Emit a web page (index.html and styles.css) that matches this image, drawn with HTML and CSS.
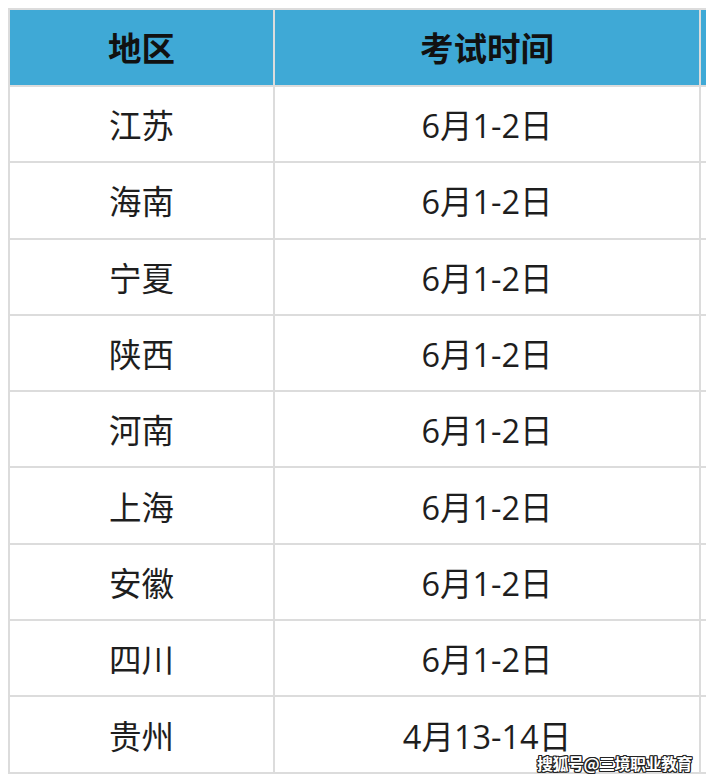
FILE: index.html
```html
<!DOCTYPE html>
<html lang="zh-CN">
<head>
<meta charset="utf-8">
<link rel="stylesheet" href="styles.css">
</head>
<body>
<div class="wrap">
<table class="exam">
  <thead>
    <tr><th class="c1">地区</th><th class="c2">考试时间</th><th class="c3"></th></tr>
  </thead>
  <tbody>
    <tr><td>江苏</td><td>6月1-2日</td><td></td></tr>
    <tr><td>海南</td><td>6月1-2日</td><td></td></tr>
    <tr><td>宁夏</td><td>6月1-2日</td><td></td></tr>
    <tr><td>陕西</td><td>6月1-2日</td><td></td></tr>
    <tr><td>河南</td><td>6月1-2日</td><td></td></tr>
    <tr><td>上海</td><td>6月1-2日</td><td></td></tr>
    <tr><td>安徽</td><td>6月1-2日</td><td></td></tr>
    <tr><td>四川</td><td>6月1-2日</td><td></td></tr>
    <tr><td>贵州</td><td>4月13-14日</td><td></td></tr>
  </tbody>
</table>
<div class="mark">搜狐号@三境职业教育</div>
</div>
</body>
</html>
```
FILE: styles.css
```css
html, body {
  margin: 0;
  padding: 0;
  overflow: hidden;
  background: #fff;
}
body {
  padding: 8px;
  width: 706px;
  height: 780px;
  box-sizing: border-box;
  font-family: "Open Sans", "Noto Sans CJK SC", sans-serif;
}
.wrap {
  position: relative;
  width: 800px;
}
.exam {
  border-collapse: separate;
  border-spacing: 2px;
  background: #dcdcdc;
  table-layout: fixed;
  width: 800px;
}
.exam th, .exam td {
  padding: 3px 0 0;
  text-align: center;
  vertical-align: middle;
  background: #fff;
  color: #1e1e1e;
  font-size: 32.5px;
  font-weight: 400;
  height: 71.3px;
  line-height: 1.2;
}
.exam th {
  background: #3fa9d6;
  font-weight: 700;
  font-size: 33.5px;
  color: #111;
  height: 74px;
  padding-top: 1px;
}
.c1 { width: 263px; }
.c2 { width: 424px; }
.mark {
  position: absolute;
  right: 116px;
  top: 743px;
  font-family: "Noto Sans CJK SC", sans-serif;
  font-size: 16px;
  font-weight: 700;
  color: #fff;
  letter-spacing: -0.5px;
  text-shadow: -1px -1px 0 #222, 1px -1px 0 #222, -1px 1px 0 #222, 1px 1px 0 #222, 0 1px 0 #222, 0 -1px 0 #222, 1px 0 0 #222, -1px 0 0 #222;
}
```
